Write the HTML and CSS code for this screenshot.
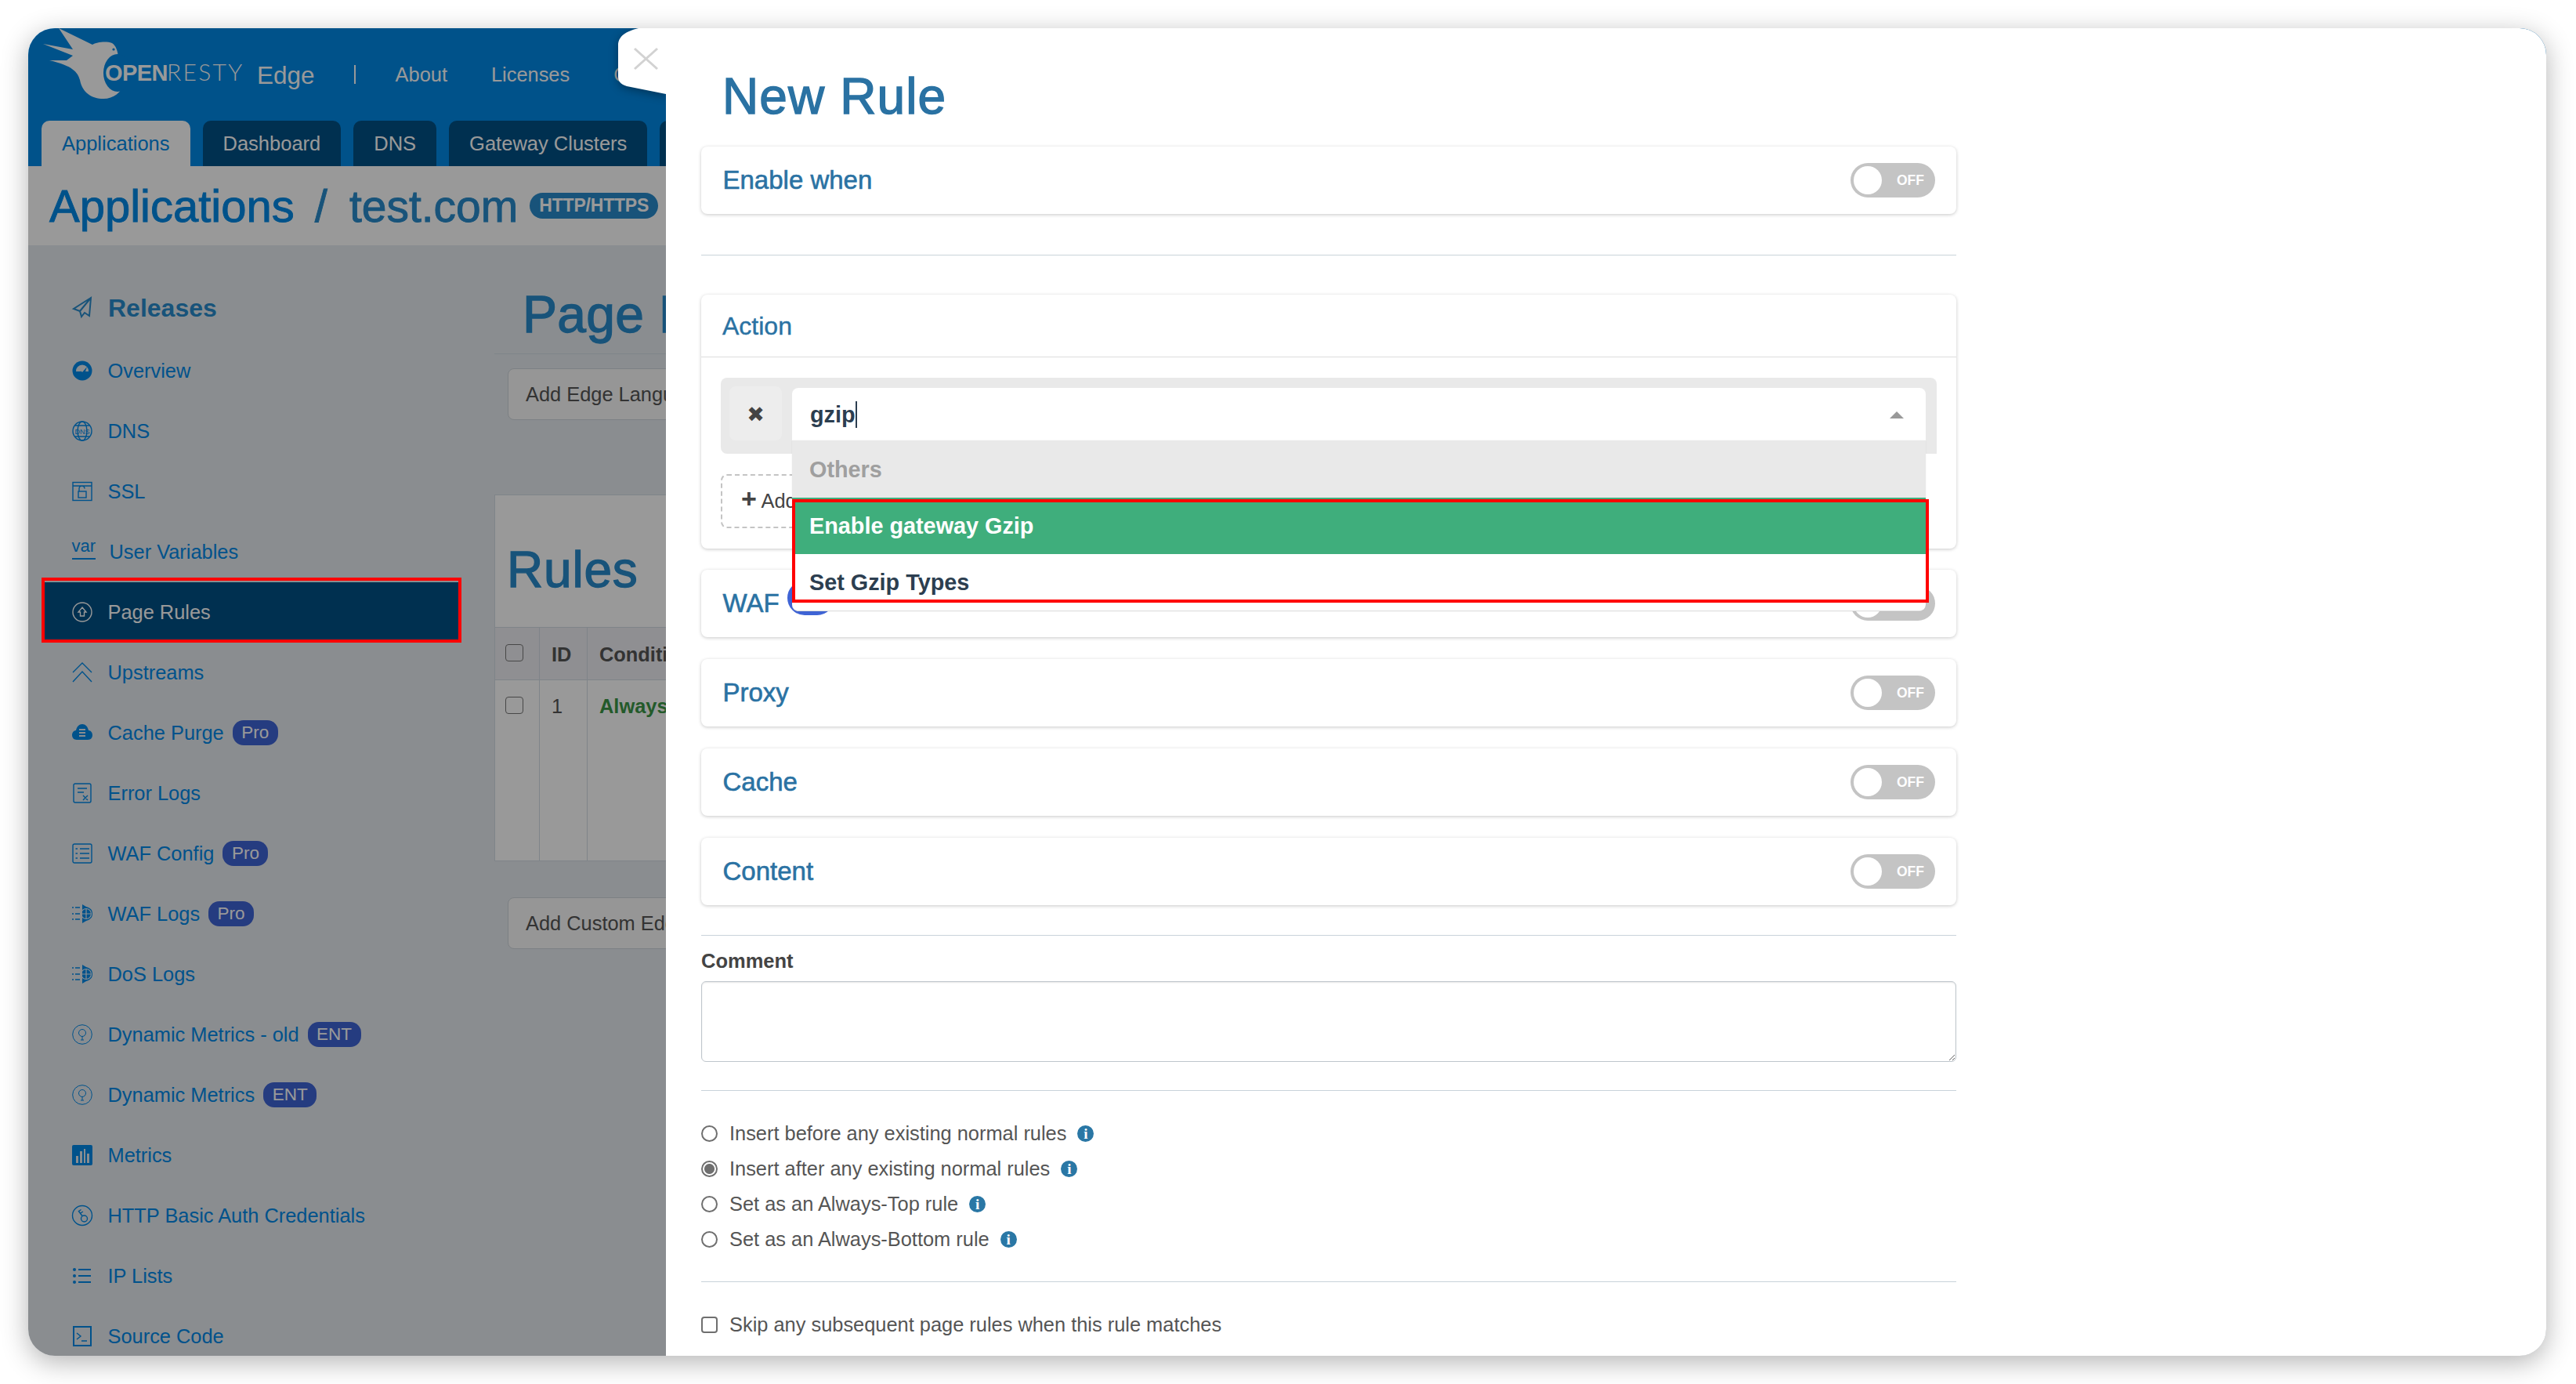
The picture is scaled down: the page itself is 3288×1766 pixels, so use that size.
FILE: index.html
```html
<!DOCTYPE html>
<html lang="en">
<head>
<meta charset="utf-8">
<title>New Rule</title>
<link rel="stylesheet" href="styles.css">
</head>
<body>
<div class="window">
  <div class="app">
    <header class="topbar">
      <div class="toprow">
        <svg class="logo" viewBox="0 0 260 92" width="260" height="92">
          <path class="logo-bird" d="M20 0 L63 21 C68 18 80 16 88 19 C93 22 95 29 96 36 L90 36 C92 40 91 44 90 46 C98 50 104 62 104 70 C100 82 90 90 77 90 C62 90 50 82 47 66 C44 56 38 48 8 41 L30 41 L38 35 L0 20 L38 27 Z"/>
          <ellipse class="logo-hole" cx="95" cy="57" rx="18" ry="24"/>
          <circle class="logo-eye" cx="90" cy="27" r="1.6"/>
          <text class="logo-open" x="79" y="67">OPEN</text>
          <text class="logo-resty" x="158" y="67">RESTY</text>
        </svg>
        <span class="edge">Edge</span>
        <span class="topsep"></span>
        <nav class="topnav"><a>About</a><a>Licenses</a><a>Changelog</a></nav>
      </div>
      <nav class="tabs">
        <a class="tab tab-active">Applications</a>
        <a class="tab">Dashboard</a>
        <a class="tab">DNS</a>
        <a class="tab">Gateway Clusters</a>
        <a class="tab">Nodes</a>
      </nav>
    </header>
    <div class="titleband">
      <span class="crumb-app">Applications</span>
      <span class="crumb-sep">/</span>
      <span class="crumb-site">test.com</span>
      <span class="proto">HTTP/HTTPS</span>
    </div>
    <div class="appbody">
      <aside class="sidebar">
        <div class="side-head">
          <svg class="ico" viewBox="0 0 26 26"><path class="ln" d="M24 1 L2 15 L10 18 L12 25 L16 20 L22 24 Z M24 1 L10 18"/></svg>
          <span>Releases</span>
        </div>
        <a class="side-item">
          <svg class="ico" viewBox="0 0 26 26"><circle class="fl" cx="13" cy="13" r="12.5"/><path class="cut" d="M5 14 A8 8 0 0 1 13 5.500 A8 8 0 0 1 21 14 L17 14 L19 8 L13 15 A2.500 2.500 0 0 0 10 14 Z"/></svg>
          <span>Overview</span>
        </a>
        <a class="side-item">
          <svg class="ico" viewBox="0 0 26 26"><circle class="ln thin" cx="13" cy="13" r="12"/><ellipse class="ln thin" cx="13" cy="13" rx="6" ry="12"/><path class="ln thin" d="M3 6 H23 M3 20 H23"/><text class="ico-dns" x="13" y="16.500">DNS</text></svg>
          <span>DNS</span>
        </a>
        <a class="side-item">
          <svg class="ico" viewBox="0 0 26 26"><rect class="ln thin" x="1" y="1.500" width="24" height="23"/><path class="ln thin" d="M1 6 H25 M9 13 V9.500 A3.500 3.500 0 0 1 16 9.500"/><rect class="ln thin" x="8" y="13" width="10" height="8"/></svg>
          <span>SSL</span>
        </a>
        <a class="side-item">
          <span class="ico-var">var</span>
          <span>User Variables</span>
        </a>
        <a class="side-item side-active">
          <svg class="ico" viewBox="0 0 26 26"><circle class="ln thin" cx="13" cy="13" r="12"/><path class="ln thin" d="M13 7 L18 13 H15.500 V18 H10.500 V13 H8 Z"/></svg>
          <span>Page Rules</span>
        </a>
        <a class="side-item">
          <svg class="ico" viewBox="0 0 26 26"><path class="ln thin" d="M1 13 L13 1 L25 13 M1 25 L13 12 L25 25"/></svg>
          <span>Upstreams</span>
        </a>
        <a class="side-item">
          <svg class="ico" viewBox="0 0 26 26"><path class="fl" d="M6 22 C2 22 0 19 0 16 C0 12 3 10 5 10 C6 5 9 2 13 2 C17 2 20 5 21 10 C24 10 26 13 26 16 C26 19 24 22 20 22 Z"/><path class="cut" d="M9 8 H17 V10 H9 Z M9 12 H17 V14 H9 Z M9 16 H17 V18 H9 Z"/></svg>
          <span>Cache Purge</span><span class="badge">Pro</span>
        </a>
        <a class="side-item">
          <svg class="ico" viewBox="0 0 26 26"><rect class="ln thin" x="2" y="1" width="22" height="24" rx="2"/><path class="ln thin" d="M7 7 H19 M7 12 H15 M14 16 L20 22 M20 16 L14 22"/></svg>
          <span>Error Logs</span>
        </a>
        <a class="side-item">
          <svg class="ico" viewBox="0 0 26 26"><rect class="ln thin" x="1" y="1" width="24" height="24" rx="2"/><path class="ln thin" d="M10 7 H22 M10 13 H22 M10 19 H22 M4.500 7 H7 M4.500 13 H7 M4.500 19 H7"/></svg>
          <span>WAF Config</span><span class="badge">Pro</span>
        </a>
        <a class="side-item">
          <svg class="ico" viewBox="0 0 26 26"><use href="#shield"/></svg>
          <span>WAF Logs</span><span class="badge">Pro</span>
        </a>
        <a class="side-item">
          <svg class="ico" viewBox="0 0 26 26"><use href="#shield"/></svg>
          <span>DoS Logs</span>
        </a>
        <a class="side-item">
          <svg class="ico" viewBox="0 0 26 26"><use href="#bulb"/></svg>
          <span>Dynamic Metrics - old</span><span class="badge">ENT</span>
        </a>
        <a class="side-item">
          <svg class="ico" viewBox="0 0 26 26"><use href="#bulb"/></svg>
          <span>Dynamic Metrics</span><span class="badge">ENT</span>
        </a>
        <a class="side-item">
          <svg class="ico" viewBox="0 0 26 26"><rect class="fl" x="0" y="0" width="26" height="26" rx="2"/><path class="cut" d="M5 14 H8 V23 H5 Z M10 8 H13 V23 H10 Z M15 5 H17 V23 H15 Z M19 11 H22 V23 H19 Z"/></svg>
          <span>Metrics</span>
        </a>
        <a class="side-item">
          <svg class="ico" viewBox="0 0 26 26"><circle class="ln thin" cx="13" cy="13" r="12.500"/><circle class="ln thin" cx="15.500" cy="17" r="4"/><path class="ln thin" d="M13 13.500 L8 7 M10.500 10 L14 8 M8.500 7.500 L11.500 5.500"/></svg>
          <span>HTTP Basic Auth Credentials</span>
        </a>
        <a class="side-item">
          <svg class="ico" viewBox="0 0 26 26"><path class="ln" d="M8 5 H24 M8 13 H24 M8 21 H24"/><circle class="fl" cx="3" cy="5" r="2"/><circle class="fl" cx="3" cy="13" r="2"/><circle class="fl" cx="3" cy="21" r="2"/></svg>
          <span>IP Lists</span>
        </a>
        <a class="side-item">
          <svg class="ico" viewBox="0 0 26 26"><rect class="ln" x="2" y="1" width="22" height="24"/><path class="ln thin" d="M6 9 L11 13 L6 17 M12 19 H19"/></svg>
          <span>Source Code</span>
        </a>
      </aside>
      <main class="main">
        <h2 class="page-title">Page R</h2>
        <button class="btn">Add Edge Language Rule</button>
        <section class="rules">
          <h2 class="rules-title">Rules</h2>
          <div class="rules-head">
            <div class="col-check"><span class="chk"></span></div>
            <div class="col-id">ID</div>
            <div class="col-cond">Conditions</div>
          </div>
          <div class="rules-row">
            <div class="col-check"><span class="chk"></span></div>
            <div class="col-id">1</div>
            <div class="col-cond always">Always</div>
          </div>
        </section>
        <button class="btn btn-custom">Add Custom Edge Language Rule</button>
      </main>
    </div>
  </div>

  <div class="dim"></div>

  <svg class="closetab" viewBox="0 0 90 110" width="90" height="110">
    <path class="closetab-bg" d="M75 10 L40 10 C24 14 14 20 14 32 L14 72 C14 80 20 82 25 84 L75 94 Z"/>
    <path class="closetab-x" d="M35 36 L64 62 M64 36 L35 62"/>
  </svg>

  <section class="panel">
    <h1 class="panel-title">New Rule</h1>
    <div class="card card-row">
      <span class="card-label">Enable when</span>
      <span class="toggle"><span class="knob"></span><span class="toggle-text">OFF</span></span>
    </div>
    <hr class="rule rule-a">
    <div class="card card-action">
      <div class="action-head">Action</div>
      <div class="action-body">
        <div class="rulebox">
          <span class="remove">&#10006;</span>
          <div class="select">
            <span class="select-value">gzip</span><span class="caret-bar"></span>
            <span class="select-arrow"></span>
            <div class="dropdown">
              <div class="opt opt-group">Others</div>
              <div class="opt opt-hot">Enable gateway Gzip</div>
              <div class="opt">Set Gzip Types</div>
            </div>
          </div>
        </div>
        <div class="addbtn"><span class="plus">+</span> Add Action</div>
      </div>
    </div>
    <div class="card card-row card-gap-a">
      <span class="card-label">WAF</span><span class="pill"></span>
      <span class="toggle"><span class="knob"></span><span class="toggle-text">OFF</span></span>
    </div>
    <div class="card card-row card-gap">
      <span class="card-label">Proxy</span>
      <span class="toggle"><span class="knob"></span><span class="toggle-text">OFF</span></span>
    </div>
    <div class="card card-row card-gap">
      <span class="card-label">Cache</span>
      <span class="toggle"><span class="knob"></span><span class="toggle-text">OFF</span></span>
    </div>
    <div class="card card-row card-gap">
      <span class="card-label">Content</span>
      <span class="toggle"><span class="knob"></span><span class="toggle-text">OFF</span></span>
    </div>
    <hr class="rule rule-b">
    <label class="field-label">Comment</label>
    <textarea class="comment"></textarea>
    <hr class="rule rule-c">
    <div class="radios">
      <label class="radio-row"><input type="radio" name="pos" class="radio"><span>Insert before any existing normal rules</span><span class="info">i</span></label>
      <label class="radio-row"><input type="radio" name="pos" class="radio" checked><span>Insert after any existing normal rules</span><span class="info">i</span></label>
      <label class="radio-row"><input type="radio" name="pos" class="radio"><span>Set as an Always-Top rule</span><span class="info">i</span></label>
      <label class="radio-row"><input type="radio" name="pos" class="radio"><span>Set as an Always-Bottom rule</span><span class="info">i</span></label>
    </div>
    <hr class="rule rule-d">
    <label class="radio-row skip-row"><input type="checkbox" class="checkbox"><span>Skip any subsequent page rules when this rule matches</span></label>
  </section>

  <div class="mark mark-side"></div>
  <div class="mark mark-options"></div>

  <svg class="defs" width="0" height="0">
    <defs>
      <g id="shield">
        <path class="fl" d="M13 1 L13 25 L18 22 C25 20 26 16 26 13 C26 9 25 6 18 4 Z"/>
        <circle class="cut-ln" cx="18" cy="13" r="6.500"/>
        <path class="cut-ln" d="M18 6.500 V19.500 M11.500 13 H24.500"/>
        <path class="ln thin" d="M0 5 H2 M4 5 H10 M0 13 H2 M4 13 H10 M0 20 H2 M4 20 H10"/>
      </g>
      <g id="bulb">
        <circle class="ln hair" cx="13" cy="13" r="12.300"/>
        <circle class="ln hair" cx="13" cy="11" r="4.500"/>
        <path class="ln hair" d="M13 15 V20 M11 20 H15"/>
      </g>
    </defs>
  </svg>
</div>
</body>
</html>
```

FILE: styles.css
```css
* { box-sizing: border-box; }
html, body { margin: 0; padding: 0; background: #fff; }
body { padding: 36px 38px 36px 36px; font-family: "Liberation Sans", Arial, sans-serif; font-size: 25.400px; color: #555; }

.window { position: relative; height: 1694px; border-radius: 34px; overflow: clip; background: #fff; }
body::before { content: ""; position: absolute; left: 36px; top: 36px; width: 3214px; height: 1694px; border-radius: 34px; box-shadow: 0 8px 34px rgba(0, 0, 0, .3); }

.app { display: flex; flex-direction: column; height: 100%; background: #e6ebf0; }
.topbar { height: 176px; background: #0089e6; display: flex; flex-direction: column; }
.toprow { height: 118px; display: flex; align-items: flex-start; color: #fff; }
.logo { margin-left: 19px; flex: none; }
.logo-bird { fill: #fff; }
.logo-hole { fill: #0089e6; }
.logo-eye { fill: #0089e6; }
.logo-open { fill: #fff; font-family: "Liberation Sans", sans-serif; font-weight: 700; font-size: 29px; letter-spacing: -.6px; }
.logo-resty { fill: #fff; font-family: "Lato", sans-serif; font-weight: 300; font-size: 30px; letter-spacing: 2.300px; }
.edge { margin: 42px 0 0 13px; font-size: 31.500px; line-height: 36px; }
.topsep { width: 2px; height: 24px; background: #fff; margin: 47px 0 0 50px; }
.topnav { display: flex; gap: 56px; margin: 43px 0 0 51px; line-height: 32px; }

.tabs { height: 58px; display: flex; gap: 16px; padding-left: 17px; }
.tab { padding: 0 26px; line-height: 58px; font-size: 25.500px; background: #005085; color: #fff; border-radius: 10px 10px 0 0; white-space: nowrap; }
.tab-active { background: #fff; color: #0089e6; }

.titleband { height: 101px; background: #fff; display: flex; align-items: center; padding-left: 27px; font-size: 58px; -webkit-text-stroke: .9px currentColor; }
.crumb-app { color: #0089e6; }
.crumb-sep { color: #288bcb; margin: 0 28px 0 26px; }
.crumb-site { color: #288bcb; font-size: 57px; }
.proto { margin-left: 15px; height: 33px; line-height: 33px; padding: 0 12px; border-radius: 17px; background: #288bcb; color: #fff; font-size: 23px; font-weight: 700; -webkit-text-stroke: 0; letter-spacing: -.2px; }

.appbody { flex: 1; display: flex; min-height: 0; overflow: hidden; }
.sidebar { flex: none; width: 595px; padding: 41.500px 42px 0 17px; color: #0089e8; }
.side-head { height: 77px; margin-bottom: 3px; padding-left: 39px; display: flex; align-items: center; font-size: 32px; font-weight: 700; color: #288bcb; }
.side-head .ico { margin-bottom: 3px; }
.side-item { height: 77px; padding-left: 38.500px; display: flex; align-items: center; white-space: nowrap; }
.side-active { background: #005085; color: #fff; }
.ico { flex: none; width: 26px; height: 26px; margin-right: 20px; overflow: visible; }
.ico-var { flex: none; width: 30px; margin-right: 18px; height: 26px; border-bottom: 2px solid currentColor; font-size: 22px; line-height: 18px; margin-top: -7px; }
.ln { fill: none; stroke: currentColor; stroke-width: 2; }
.thin { stroke-width: 1.400; }
.hair { stroke-width: 1; }
.fl { fill: currentColor; }
.cut { fill: #e6ebf0; }
.cut-ln { fill: none; stroke: #e6ebf0; stroke-width: 1.200; }
.ico-dns { fill: currentColor; font-size: 9px; text-anchor: middle; font-family: "Liberation Sans", sans-serif; }
.badge { margin-left: 11px; height: 32px; line-height: 32px; padding: 0 11.500px; border-radius: 14px; background: #3f64d5; color: #fff; font-size: 22.500px; }

.main { flex: 1; padding: 48px 0 0; min-width: 0; color: #555; }
.page-title { margin: 0; padding: 0 0 10px 36px; font-size: 66px; line-height: 80px; font-weight: 400; -webkit-text-stroke: 1.300px currentColor; letter-spacing: .3px; color: #288bcb; border-bottom: 1px solid #d4dde4; white-space: nowrap; }
.btn { display: block; margin: 18px 0 0 17px; height: 66px; padding: 0 22px; border: 1px solid #cfd6dc; border-radius: 8px; background: #fafafa; color: #555; font: 25.400px "Liberation Sans", sans-serif; white-space: nowrap; }
.rules { margin-top: 95px; height: 468px; border: 1px solid #d4dde4; border-right: 0; background: #fff; }
.rules-title { margin: 0; height: 168px; padding: 59px 0 0 15px; font-size: 64px; line-height: 72px; font-weight: 400; -webkit-text-stroke: 1.300px currentColor; letter-spacing: .8px; color: #288bcb; }
.rules-head { display: flex; height: 68px; background: #eeeff3; border-top: 1px solid #d4dde4; border-bottom: 1px solid #d4dde4; font-weight: 700; align-items: stretch; line-height: 68px; }
.rules-row { display: flex; height: 231px; line-height: 66px; }
.col-check { flex: none; width: 57px; border-right: 1px solid #d4dde4; padding: 21px 0 0 13px; line-height: 0; }
.col-id { flex: none; width: 61px; border-right: 1px solid #d4dde4; padding-left: 15px; }
.col-cond { flex: 1; padding-left: 15px; }
.always { color: #3b9646; font-weight: 700; }
.chk { display: block; width: 23px; height: 22px; border: 1.500px solid #777; border-radius: 4px; }
.btn-custom { margin-top: 46px; }

.dim { position: absolute; inset: 0; background: rgba(0, 0, 0, .4); }

.closetab { position: absolute; left: 739px; top: -10px; filter: drop-shadow(0 3px 6px rgba(0, 0, 0, .35)); }
.closetab-bg { fill: #fff; }
.closetab-x { fill: none; stroke: #d2d2d2; stroke-width: 3; }

.panel { position: absolute; left: 814px; top: 0; right: 0; bottom: 0; background: #fff; padding: 51px 0 0 45px; color: #555; }
.panel > * { width: 1602px; }
.panel-title { margin: 0 0 28px; padding-left: 27px; font-size: 64px; line-height: 72px; font-weight: 400; -webkit-text-stroke: 1.400px currentColor; letter-spacing: 1.100px; color: #2a72a3; }
.card { background: #fff; border-radius: 8px; box-shadow: 0 1px 4px rgba(0, 0, 0, .22); }
.card-row { height: 86px; display: flex; align-items: center; padding: 0 27px 0 27.500px; }
.card-label { margin-bottom: 1px; font-size: 33px; color: #2a72a3; -webkit-text-stroke: .6px currentColor; }
.card-gap-a { margin-top: 27px; }
.card-gap { margin-top: 28px; }
.toggle { margin-left: auto; width: 108px; height: 44px; border-radius: 22px; background: #c4c4c4; display: flex; align-items: center; padding: 0 14px 0 4px; justify-content: space-between; }
.knob { width: 36px; height: 36px; border-radius: 50%; background: #fff; }
.toggle-text { color: #fff; font-size: 17.500px; font-weight: 700; }
.pill { width: 60px; height: 44px; margin: 0 0 14px 10px; border: 7px solid #3f64d5; border-radius: 22px; }

.rule { height: 1px; border: 0; margin: 0; background: #c9d3da; }
.rule-a { margin: 52px 0 50px; }
.rule-b { margin: 38px 0 17px; }
.rule-c { margin: 36px 0 32px; }
.rule-d { margin: 31px 0 32px; }

.card-action { height: 324px; }
.action-head { height: 80px; padding: 0 0 0 27px; border-bottom: 1px solid #ddd; font-size: 32px; line-height: 80px; color: #2a72a3; -webkit-text-stroke: .4px currentColor; }
.action-body { padding: 26px 25px 0; }
.rulebox { height: 97px; background: #e9e9e9; border-radius: 8px 8px 0 8px; display: flex; align-items: flex-start; padding: 11px 14px 0 11px; gap: 13px; }
.remove { flex: none; width: 67px; height: 69px; border-radius: 8px; background: #ededed; color: #444; font-size: 27px; line-height: 71px; text-align: center; font-family: "DejaVu Sans", sans-serif; }
.select { position: relative; flex: 1; margin-top: 2px; height: 67px; background: #fff; border-radius: 8px 8px 0 0; display: flex; align-items: center; padding-left: 23px; font-size: 28.800px; font-weight: 700; color: #2c3e50; }
.select-value { margin-top: 1px; }
.caret-bar { width: 2px; height: 34px; background: #2c3e50; }
.select-arrow { position: absolute; right: 28px; top: 30px; width: 0; height: 0; border-left: 9px solid transparent; border-right: 9px solid transparent; border-bottom: 9px solid #999; }
.dropdown { position: absolute; left: 0; right: 0; top: 100%; background: #fff; border-radius: 0 0 8px 8px; border-bottom: 1px solid #ddd; box-shadow: 0 0 1px rgba(0, 0, 0, .2); overflow: hidden; }
.opt { height: 72px; line-height: 72px; padding-left: 22px; font-size: 28.800px; font-weight: 700; color: #2c3e50; }
.opt-group { height: 73px; line-height: 74px; background: #e9e9e9; color: #9f9f9f; }
.opt-hot { background: #3fae7c; color: #fff; }
.addbtn { width: 320px; height: 69px; margin-top: 26px; padding-left: 24px; border: 2px dashed #c4c4c4; border-radius: 8px; line-height: 65px; color: #444; }
.plus { font-size: 34px; font-weight: 700; line-height: 0; }

.field-label { display: block; font-weight: 700; font-size: 25.500px; line-height: 30px; color: #444; }
.comment { display: block; margin-top: 11px; height: 103px; padding: 8px; border: 1px solid #bfc6cc; border-radius: 6px; background: #fff; box-shadow: inset 0 1px 2px rgba(0, 0, 0, .1); outline: 0; resize: both; }
.radios { display: flex; flex-direction: column; }
.radio-row { display: flex; align-items: center; height: 45px; color: #555; white-space: nowrap; }
.radio, .checkbox { appearance: none; -webkit-appearance: none; margin: 0 15px 0 0; flex: none; width: 21px; height: 21px; background: #fff; border: 2px solid #6f6f6f; }
.radio { border-radius: 50%; }
.checkbox { border-radius: 4px; }
.radio:checked { background: radial-gradient(circle, #6f6f6f 0 6px, #fff 7px); }
.info { width: 21px; height: 21px; margin-left: 14px; border-radius: 50%; background: #2a77a5; color: #fff; font: 700 19px/21px "Liberation Serif", serif; text-align: center; }

.mark { position: absolute; border: 4px solid #f00; pointer-events: none; }
.mark-side { left: 17px; top: 701px; width: 536px; height: 83px; }
.mark-options { left: 975px; top: 601px; width: 1451px; height: 132px; }
.defs { position: absolute; }
```
